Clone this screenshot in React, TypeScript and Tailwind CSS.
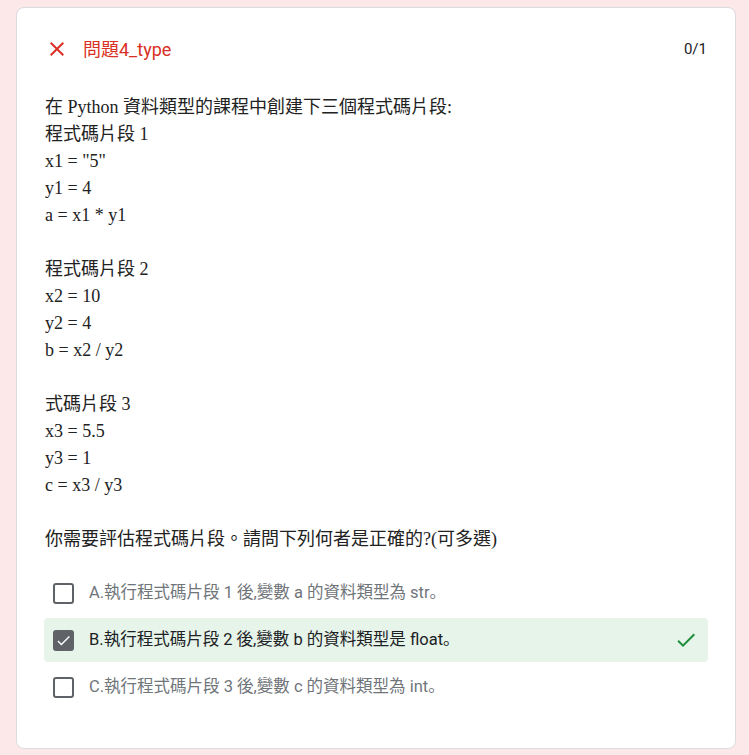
import React from "react";

const serif = { fontFamily: '"Liberation Serif", "Noto Sans CJK TC", serif' };
const sans = { fontFamily: 'Roboto, "Noto Sans CJK TC", sans-serif' };
const optSans = { fontFamily: 'Roboto, "Noto Sans CJK JP", sans-serif' };

const lines: string[] = [
  "在 Python 資料類型的課程中創建下三個程式碼片段:",
  "程式碼片段 1",
  'x1 = "5"',
  "y1 = 4",
  "a = x1 * y1",
  "",
  "程式碼片段 2",
  "x2 = 10",
  "y2 = 4",
  "b = x2 / y2",
  "",
  "式碼片段 3",
  "x3 = 5.5",
  "y3 = 1",
  "c = x3 / y3",
  "",
  "你需要評估程式碼片段。請問下列何者是正確的?(可多選)",
];

const options = [
  { text: "A.執行程式碼片段 1 後,變數 a 的資料類型為 str。", checked: false },
  { text: "B.執行程式碼片段 2 後,變數 b 的資料類型是 float。", checked: true },
  { text: "C.執行程式碼片段 3 後,變數 c 的資料類型為 int。", checked: false },
];

export default function App() {
  return (
    <div className="min-h-[755px] w-[749px] bg-[#fce8e8] pt-[7px] pl-[16px]">
      <div className="w-[720px] h-[742px] bg-white border border-[#dadce0] rounded-[8px] px-[27px] pt-[28px]">
        <div className="flex items-center h-[26px]" style={sans}>
          <svg width="24" height="24" viewBox="0 0 24 24" className="ml-[1px]">
            <path
              fill="#d93025"
              d="M19 6.41L17.59 5 12 10.59 6.41 5 5 6.41 10.59 12 5 17.59 6.41 19 12 13.41 17.59 19 19 17.59 13.41 12z"
            />
          </svg>
          <div className="ml-[14px] text-[18px] text-[#d93025]">問題4_type</div>
          <div className="ml-auto mr-[1px] text-[15px] text-[#202124]">0/1</div>
        </div>
        <div className="mt-[32px] text-[18px] text-[#222] leading-[27px] pl-[1px]" style={serif}>
          {lines.map((l, i) => (
            <div key={i} className="h-[27px] whitespace-pre">
              {l}
            </div>
          ))}
        </div>
        <div className="mt-[18px] flex flex-col gap-[3px]" style={optSans}>
          {options.map((o, i) => (
            <div
              key={i}
              className={
                "h-[44px] flex items-center rounded-[4px] pl-[9px] pr-[10px] " +
                (o.checked ? "bg-[#e6f4ea]" : "")
              }
            >
              {o.checked ? (
                <div className="w-[21px] h-[21px] rounded-[3px] bg-[#5f6368] flex items-center justify-center">
                  <svg width="17" height="17" viewBox="0 0 24 24">
                    <path fill="#fff" d="M9 16.17L4.83 12l-1.42 1.41L9 19 21 7l-1.41-1.41z" />
                  </svg>
                </div>
              ) : (
                <div className="w-[21px] h-[21px] rounded-[3px] border-2 border-[#5f6368]" />
              )}
              <div
                className={
                  "ml-[15px] text-[16.5px] " + (o.checked ? "text-[#202124]" : "text-[#70757a]")
                }
              >
                {o.text}
              </div>
              {o.checked && (
                <svg width="24" height="24" viewBox="0 0 24 24" className="ml-auto">
                  <path fill="#1e8e3e" d="M9 16.17L4.83 12l-1.42 1.41L9 19 21 7l-1.41-1.41z" />
                </svg>
              )}
            </div>
          ))}
        </div>
      </div>
    </div>
  );
}
